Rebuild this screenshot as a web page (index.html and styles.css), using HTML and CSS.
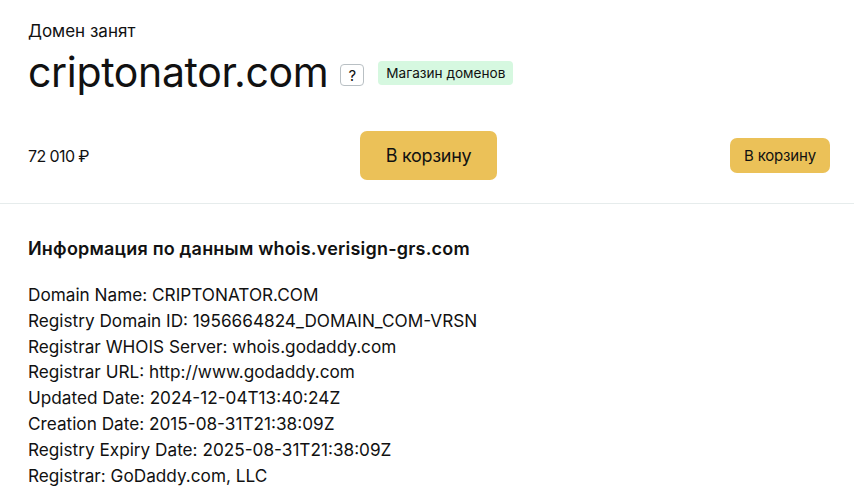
FILE: index.html
```html
<!DOCTYPE html>
<html lang="ru">
<head>
<meta charset="utf-8">
<link rel="stylesheet" href="styles.css">
</head>
<body>
<div class="page">
  <section class="top">
    <div class="status">Домен занят</div>
    <div class="title-row">
      <h1 class="domain">criptonator.com</h1>
      <span class="help">?</span>
      <span class="badge">Магазин доменов</span>
    </div>
    <div class="buy-row">
      <div class="price">72 010 ₽</div>
      <button class="btn btn-big">В корзину</button>
      <button class="btn btn-small">В корзину</button>
    </div>
  </section>
  <section class="whois">
    <h2 class="whois-title">Информация по данным whois.verisign-grs.com</h2>
    <div class="whois-lines">
      <div>Domain Name: CRIPTONATOR.COM</div>
      <div>Registry Domain ID: 1956664824_DOMAIN_COM-VRSN</div>
      <div>Registrar WHOIS Server: whois.godaddy.com</div>
      <div>Registrar URL: http://www.godaddy.com</div>
      <div>Updated Date: 2024-12-04T13:40:24Z</div>
      <div>Creation Date: 2015-08-31T21:38:09Z</div>
      <div>Registry Expiry Date: 2025-08-31T21:38:09Z</div>
      <div>Registrar: GoDaddy.com, LLC</div>
    </div>
  </section>
</div>
</body>
</html>
```
FILE: styles.css
```css
* { box-sizing: border-box; }
html, body { margin: 0; padding: 0; background: #fff; }
body {
  font-family: Inter, "Noto Sans", sans-serif;
  color: #111;
  overflow: hidden;
}
.top {
  padding: 20px 24px 0 28px;
  border-bottom: 1px solid #e6ecec;
  height: 204px;
}
.status {
  font-size: 17px;
  line-height: 22px;
}
.title-row {
  display: flex;
  align-items: center;
  margin-top: 6px;
  height: 48px;
}
.domain {
  margin: 0;
  font-size: 41px;
  font-weight: 400;
  line-height: 48px;
  letter-spacing: -0.35px;
}
.help {
  margin-left: 12px;
  width: 24px;
  height: 22px;
  border: 1px solid #b9c0c4;
  border-radius: 4px;
  display: flex;
  align-items: center;
  justify-content: center;
  font-size: 15px;
  margin-top: 6px;
}
.badge {
  margin-left: 14px;
  background: #d6f8e0;
  border-radius: 4px;
  height: 24px;
  padding: 0 8px;
  display: flex;
  align-items: center;
  font-size: 13.6px;
  margin-top: 2px;
}
.buy-row {
  display: flex;
  align-items: center;
  margin-top: 35px;
}
.price {
  font-size: 16px;
  letter-spacing: -0.6px;
  word-spacing: 0;
  width: 332px;
  white-space: pre;
}
.btn {
  font-family: inherit;
  border: 0;
  background: #ebc158;
  color: #111;
  border-radius: 7px;
  cursor: pointer;
  padding: 0;
}
.btn-big {
  width: 137px;
  height: 49px;
  font-size: 18px;
  letter-spacing: -0.3px;
}
.btn-small {
  margin-left: auto;
  width: 100px;
  height: 35px;
  font-size: 15px;
  letter-spacing: -0.2px;
}
.whois {
  padding: 34px 28px 0;
}
.whois-title {
  margin: 0;
  font-size: 18px;
  font-weight: 600;
  line-height: 22px;
  letter-spacing: 0.2px;
}
.whois-lines {
  margin-top: 22px;
  font-size: 17.2px;
  line-height: 25.8px;
}
```
